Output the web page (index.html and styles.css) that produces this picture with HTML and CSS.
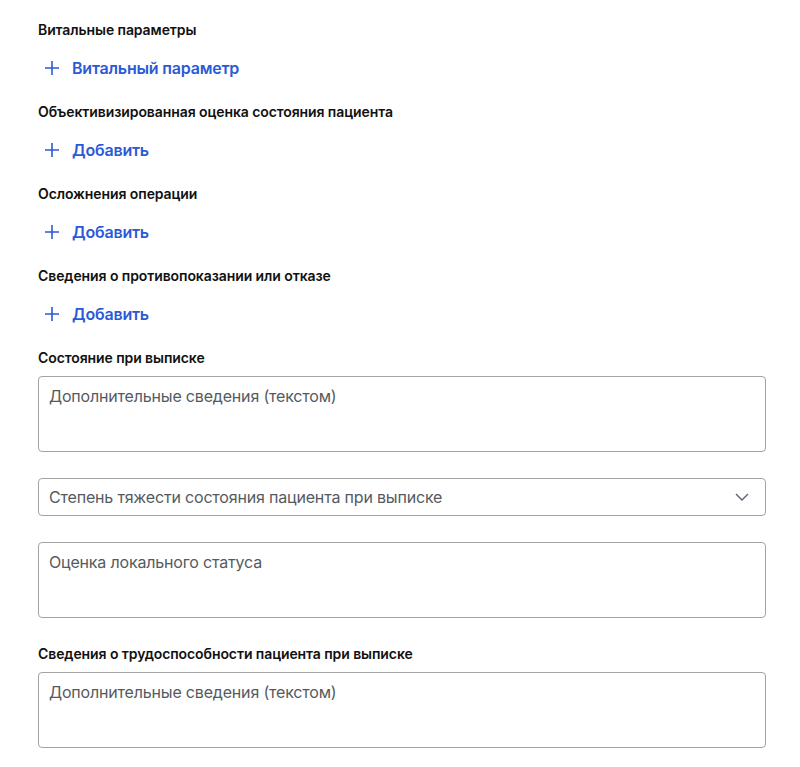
FILE: index.html
```html
<!DOCTYPE html>
<html lang="ru">
<head>
<meta charset="utf-8">
<link rel="stylesheet" href="styles.css">
</head>
<body>
<div class="page">
  <div class="group">
    <div class="label">Витальные параметры</div>
    <a class="add"><svg class="plus" viewBox="0 0 16 16"><path d="M8 1v14M1 8h14"/></svg><span>Витальный параметр</span></a>
  </div>
  <div class="group">
    <div class="label">Объективизированная оценка состояния пациента</div>
    <a class="add"><svg class="plus" viewBox="0 0 16 16"><path d="M8 1v14M1 8h14"/></svg><span>Добавить</span></a>
  </div>
  <div class="group">
    <div class="label">Осложнения операции</div>
    <a class="add"><svg class="plus" viewBox="0 0 16 16"><path d="M8 1v14M1 8h14"/></svg><span>Добавить</span></a>
  </div>
  <div class="group">
    <div class="label">Сведения о противопоказании или отказе</div>
    <a class="add"><svg class="plus" viewBox="0 0 16 16"><path d="M8 1v14M1 8h14"/></svg><span>Добавить</span></a>
  </div>
  <div class="fields">
    <div class="label">Состояние при выписке</div>
    <div class="stack">
      <div class="textarea"><span class="ph">Дополнительные сведения (текстом)</span></div>
      <div class="select"><span class="ph">Степень тяжести состояния пациента при выписке</span>
        <svg class="chev" viewBox="0 0 14 8"><path d="M1 1l6 6 6-6"/></svg></div>
      <div class="textarea"><span class="ph">Оценка локального статуса</span></div>
    </div>
  </div>
  <div class="fields last">
    <div class="label">Сведения о трудоспособности пациента при выписке</div>
    <div class="textarea"><span class="ph">Дополнительные сведения (текстом)</span></div>
  </div>
</div>
</body>
</html>
```
FILE: styles.css
```css
* { box-sizing: border-box; }
body {
  margin: 0;
  background: #fff;
  font-family: Inter, "Noto Sans", sans-serif;
  color: #111;
}
.page {
  padding: 20px 34px 0 38px;
  width: 800px;
  display: flex;
  flex-direction: column;
  gap: 22px;
}
.group {
  display: flex;
  flex-direction: column;
  gap: 16px;
}
.label {
  font-size: 14px;
  line-height: 20px;
  font-weight: 600;
  letter-spacing: -0.09px;
  color: #111;
}
.add {
  display: flex;
  align-items: center;
  gap: 12px;
  height: 24px;
  padding-left: 6px;
  color: #2a5ad6;
  font-size: 16px;
  font-weight: 600;
  letter-spacing: -0.2px;
  cursor: pointer;
}
.plus {
  width: 16px;
  height: 16px;
  fill: none;
  stroke: #2a5ad6;
  stroke-width: 1.6;
}
.fields {
  display: flex;
  flex-direction: column;
  gap: 8px;
}
.fields.last { margin-top: 4px; }
.stack {
  display: flex;
  flex-direction: column;
  gap: 26px;
}
.textarea {
  height: 76px;
  border: 1px solid #a3a3a3;
  border-radius: 4px;
  padding: 9px 10px;
}
.select {
  height: 38px;
  border: 1px solid #a3a3a3;
  border-radius: 4px;
  padding: 0 16px 0 10px;
  display: flex;
  align-items: center;
  justify-content: space-between;
}
.ph {
  font-size: 16px;
  line-height: 20px;
  letter-spacing: -0.18px;
  color: #555a60;
}
.chev {
  width: 14px;
  height: 8px;
  fill: none;
  stroke: #5a6070;
  stroke-width: 1.4;
}
```
